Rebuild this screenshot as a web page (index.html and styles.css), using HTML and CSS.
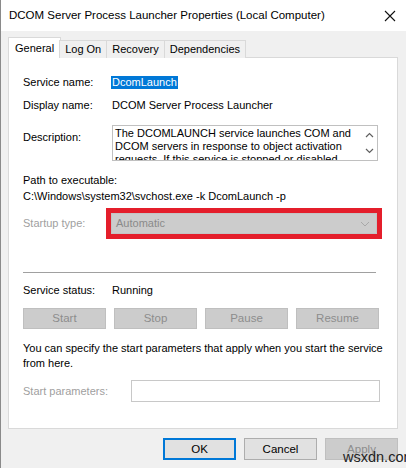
FILE: index.html
```html
<!DOCTYPE html>
<html lang="en">
<head>
    <meta charset="UTF-8">
    <title>DCOM Server Process Launcher Properties (Local Computer)</title>
    <link rel="stylesheet" href="styles.css">
</head>
<body>
    <div class="window">
        <div class="titlebar">
            <span class="title">DCOM Server Process Launcher Properties (Local Computer)</span>
            <svg class="close" width="12" height="12" viewBox="0 0 12 12">
                <path d="M1 1 L11 11 M11 1 L1 11" stroke="#111" stroke-width="1.1" fill="none"/>
            </svg>
        </div>
        <div class="body">
            <div class="tabs">
                <div class="tab active">General</div>
                <div class="tab">Log On</div>
                <div class="tab">Recovery</div>
                <div class="tab">Dependencies</div>
            </div>
            <div class="panel">
                <div class="row">
                    <span class="label">Service name:</span>
                    <span class="selected">DcomLaunch</span>
                </div>
                <div class="row row-display">
                    <span class="label">Display name:</span>
                    <span>DCOM Server Process Launcher</span>
                </div>
                <div class="row row-desc">
                    <span class="label label-desc">Description:</span>
                    <div class="textbox">
                        <div class="textbox-text">The DCOMLAUNCH service launches COM and DCOM servers in response to object activation requests. If this service is stopped or disabled, programs using COM or DCOM will not function properly.</div>
                        <div class="scrollbar">
                            <svg width="9" height="6" viewBox="0 0 9 6"><path d="M1 5 L4.5 1.5 L8 5" stroke="#606060" stroke-width="1.2" fill="none"/></svg>
                            <svg width="9" height="6" viewBox="0 0 9 6"><path d="M1 1 L4.5 4.5 L8 1" stroke="#606060" stroke-width="1.2" fill="none"/></svg>
                        </div>
                    </div>
                </div>
                <div class="path-label">Path to executable:</div>
                <div class="path">C:\Windows\system32\svchost.exe -k DcomLaunch -p</div>
                <div class="row row-startup">
                    <span class="label disabled">Startup type:</span>
                    <div class="highlight">
                        <div class="combo">
                            <span>Automatic</span>
                            <svg width="10" height="6" viewBox="0 0 10 6"><path d="M1 1 L5 5 L9 1" stroke="#a8a8a8" stroke-width="1" fill="none"/></svg>
                        </div>
                    </div>
                </div>
                <div class="separator"></div>
                <div class="row row-status">
                    <span class="label">Service status:</span>
                    <span>Running</span>
                </div>
                <div class="service-buttons">
                    <div class="btn btn-disabled">Start</div>
                    <div class="btn btn-disabled">Stop</div>
                    <div class="btn btn-disabled">Pause</div>
                    <div class="btn btn-disabled">Resume</div>
                </div>
                <p class="hint">You can specify the start parameters that apply when you start the service from here.</p>
                <div class="row row-params">
                    <span class="label label-params disabled">Start parameters:</span>
                    <div class="input"></div>
                </div>
            </div>
            <div class="footer">
                <div class="btn btn-default">OK</div>
                <div class="btn">Cancel</div>
                <div class="btn btn-disabled">Apply</div>
            </div>
        </div>
        <div class="watermark">wsxdn.com</div>
    </div>
</body>
</html>
```

FILE: styles.css
```css
* {
    margin: 0;
    padding: 0;
    box-sizing: border-box;
}

body {
    font-family: 'Liberation Sans', Arial, sans-serif;
    font-size: 11px;
    line-height: 15px;
    color: #000;
    background: #f0f0f0;
}

.window {
    position: relative;
    width: 406px;
    height: 468px;
    background: #f0f0f0;
    border-left: 1px solid #8a8a8a;
    overflow: hidden;
}

.titlebar {
    height: 31px;
    background: #fff;
    display: flex;
    align-items: center;
    justify-content: space-between;
    padding: 0 10px 0 8px;
}

.title {
    font-size: 11.5px;
    color: #000;
}

.close {
    display: block;
}

.body {
    padding: 6px 8px 0 7px;
}

.tabs {
    display: flex;
    align-items: flex-end;
    position: relative;
    z-index: 1;
    margin-bottom: -1px;
}

.tab {
    height: 18px;
    padding: 0 5px;
    border: 1px solid #d9d9d9;
    border-bottom: none;
    margin-left: -1px;
    background: #f0f0f0;
    line-height: 17px;
}

.tab:first-child {
    margin-left: 0;
}

.tab.active {
    height: 21px;
    background: #fff;
    padding: 2px 6px 0;
    margin-right: -1px;
}

.panel {
    height: 372px;
    background: #fff;
    border: 1px solid #d9d9d9;
    padding: 17px 0 0 14px;
}

.row {
    display: flex;
    align-items: center;
}

.label {
    width: 89px;
    flex-shrink: 0;
}

.disabled {
    color: #a0a0a0;
}

.selected {
    background: #0078d7;
    color: #fff;
    line-height: 13px;
    padding: 0 1px;
    margin-left: -1px;
}

.row-display {
    margin-top: 8px;
}

.row-desc {
    margin-top: 12px;
    align-items: flex-start;
}

.label-desc {
    padding-top: 5px;
}

.textbox {
    width: 266px;
    height: 36px;
    border: 1px solid #c0c0c0;
    display: flex;
    overflow: hidden;
}

.textbox-text {
    flex: 1;
    padding: 1px 2px;
    line-height: 13px;
    overflow: hidden;
}

.scrollbar {
    width: 16px;
    display: flex;
    flex-direction: column;
    align-items: center;
    justify-content: space-between;
    padding: 6px 0 6px;
}

.scrollbar svg {
    display: block;
}

.path-label {
    margin-top: 12px;
}

.path {
    margin-top: 1px;
}

.row-startup {
    margin-top: 4px;
}

.highlight {
    width: 276px;
    height: 31px;
    border: 5px solid #e41e2b;
    margin-left: -6px;
}

.combo {
    height: 21px;
    background: #cccccc;
    border: 1px solid #c4c4c4;
    display: flex;
    align-items: center;
    justify-content: space-between;
    padding: 0 6px 0 4px;
    color: #8a8a8a;
}

.combo svg {
    display: block;
}

.separator {
    width: 353px;
    height: 1px;
    background: #a0a0a0;
    margin-top: 33px;
}

.row-status {
    margin-top: 10px;
}

.service-buttons {
    display: grid;
    grid-template-columns: repeat(4, 83px);
    gap: 8px;
    margin-top: 10px;
}

.btn {
    height: 22px;
    border: 1px solid #adadad;
    background: #e1e1e1;
    display: flex;
    align-items: center;
    justify-content: center;
    font-size: 11.5px;
}

.service-buttons .btn {
    height: 21px;
}

.btn-disabled {
    background: #cccccc;
    border-color: #bfbfbf;
    color: #8d8d8d;
}

.btn-default {
    border: 2px solid #0078d7;
}

.hint {
    margin-top: 12px;
    width: 360px;
}

.row-params {
    margin-top: 9px;
}

.label-params {
    width: 108px;
}

.input {
    width: 249px;
    height: 22px;
    border: 1px solid #c8c8c8;
}

.footer {
    display: flex;
    justify-content: flex-end;
    gap: 8px;
    padding-top: 9px;
}

.footer .btn {
    width: 73px;
}

.watermark {
    position: absolute;
    left: 342px;
    top: 448px;
    font-size: 14.5px;
    line-height: 18px;
    color: #222;
}
```
